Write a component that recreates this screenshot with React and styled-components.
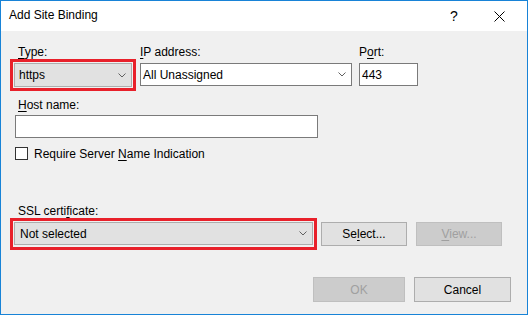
import React from "react";
import styled, { createGlobalStyle } from "styled-components";

const GlobalStyle = createGlobalStyle`
  html, body { margin: 0; padding: 0; background: #ffffff; }
  body { font-family: "Liberation Sans", Arial, sans-serif; font-size: 12px; color: #000; }
  * { box-sizing: border-box; }
`;

const Window = styled.div`
  width: 528px;
  height: 315px;
  border: 1px solid #1883d7;
  display: flex;
  flex-direction: column;
  background: #f0f0f0;
  overflow: hidden;
`;

const TitleBar = styled.div`
  height: 30px;
  flex: none;
  background: #ffffff;
  display: flex;
  align-items: center;
  padding: 0 18px 0 8px;
`;

const Title = styled.div`
  flex: 1;
  font-size: 12px;
  line-height: 15px;
  padding-bottom: 1px;
`;

const CaptionButton = styled.div`
  width: 20px;
  height: 20px;
  display: flex;
  align-items: center;
  justify-content: center;
  font-size: 14px;
  margin-left: ${(p) => p.$gap || 0}px;
`;

const Body = styled.div`
  flex: 1;
  display: flex;
  flex-direction: column;
  padding: 14px 16px 12px 9px;
`;

const FieldRow = styled.div`
  display: flex;
  align-items: flex-start;
`;

const Field = styled.div`
  display: flex;
  flex-direction: column;
  margin-left: ${(p) => p.$offset || 0}px;
`;

const Label = styled.div`
  font-size: 12px;
  line-height: 14px;
  height: 14px;
  padding-left: ${(p) => p.$indent || 0}px;
  margin-bottom: ${(p) => p.$space || 0}px;
  margin-top: ${(p) => p.$top || 0}px;
  white-space: nowrap;
`;

const U = styled.span`
  text-decoration: underline;
  text-underline-offset: 2px;
`;

const Highlight = styled.div`
  border: 3px solid #e8202a;
  padding: 1px 1px ${(p) => p.$bottom || 1}px 1px;
  display: flex;
`;

const Combo = styled.div`
  width: ${(p) => p.$w}px;
  height: ${(p) => p.$h || 23}px;
  border: 1px solid ${(p) => (p.$editable ? "#7a7a7a" : "#adadad")};
  background: ${(p) => (p.$editable ? "#ffffff" : "#e1e1e1")};
  display: flex;
  align-items: center;
  justify-content: space-between;
  padding: 0 5px 0 ${(p) => p.$pad || 4}px;
  font-size: 12px;
  line-height: 14px;
  white-space: nowrap;
`;

const TextBox = styled.div`
  width: ${(p) => p.$w}px;
  height: 23px;
  border: 1px solid #7a7a7a;
  background: #ffffff;
  display: flex;
  align-items: center;
  padding-left: 2px;
  margin-left: ${(p) => p.$left || 0}px;
  font-size: 12px;
`;

const CheckRow = styled.label`
  display: flex;
  align-items: center;
  gap: 6px;
  margin: 9px 0 0 5px;
  height: 13px;
  font-size: 12px;
  line-height: 14px;
`;

const CheckBox = styled.span`
  width: 13px;
  height: 13px;
  border: 1px solid #333333;
  background: #ffffff;
  flex: none;
`;

const SslRow = styled.div`
  display: flex;
  align-items: center;
`;

const Button = styled.div`
  width: ${(p) => p.$w}px;
  height: ${(p) => p.$h || 24}px;
  margin-left: ${(p) => p.$left || 0}px;
  border: 1px solid ${(p) => (p.$disabled ? "#bfbfbf" : "#adadad")};
  background: ${(p) => (p.$disabled ? "#cccccc" : "#e1e1e1")};
  color: ${(p) => (p.$disabled ? "#a0a0a0" : "#000000")};
  display: flex;
  align-items: center;
  justify-content: center;
  font-size: 12px;
  line-height: 14px;
`;

const Footer = styled.div`
  margin-top: auto;
  display: flex;
  justify-content: flex-end;
  gap: 9px;
`;

const Chevron = () => (
  <svg width="8" height="5" viewBox="0 0 8 5">
    <polyline points="0.5,0.5 4,4 7.5,0.5" fill="none" stroke="#606060" strokeWidth="1" />
  </svg>
);

const CloseGlyph = () => (
  <svg width="11" height="11" viewBox="0 0 11 11">
    <line x1="0.5" y1="0.5" x2="10.5" y2="10.5" stroke="#000" strokeWidth="1" />
    <line x1="10.5" y1="0.5" x2="0.5" y2="10.5" stroke="#000" strokeWidth="1" />
  </svg>
);

export default function App() {
  return (
    <>
      <GlobalStyle />
      <Window>
        <TitleBar>
          <Title>Add Site Binding</Title>
          <CaptionButton>?</CaptionButton>
          <CaptionButton $gap={25}>
            <CloseGlyph />
          </CaptionButton>
        </TitleBar>
        <Body>
          <FieldRow>
            <Field>
              <Label $indent={8}>
                <U>T</U>ype:
              </Label>
              <Highlight>
                <Combo $w={118} $h={24} $pad={4}>
                  <span>https</span>
                  <Chevron />
                </Combo>
              </Highlight>
            </Field>
            <Field $offset={4}>
              <Label $space={4}>
                <U>I</U>P address:
              </Label>
              <Combo $w={212} $editable $pad={2}>
                <span>All Unassigned</span>
                <Chevron />
              </Combo>
            </Field>
            <Field $offset={7}>
              <Label $space={4}>
                P<U>o</U>rt:
              </Label>
              <TextBox $w={59}>443</TextBox>
            </Field>
          </FieldRow>

          <Label $indent={8} $top={7} $space={3}>
            <U>H</U>ost name:
          </Label>
          <TextBox $w={303} $left={5} />

          <CheckRow>
            <CheckBox />
            <span>
              Require Server <U>N</U>ame Indication
            </span>
          </CheckRow>

          <Label $indent={8} $top={44}>
            SSL certi<U>f</U>icate:
          </Label>
          <SslRow>
            <Highlight $bottom={2}>
              <Combo $w={299} $pad={5}>
                <span>Not selected</span>
                <Chevron />
              </Combo>
            </Highlight>
            <Button $w={86} $left={4}>
              <span>
                Se<U>l</U>ect...
              </span>
            </Button>
            <Button $w={86} $left={9} $disabled>
              <span>
                <U>V</U>iew...
              </span>
            </Button>
          </SslRow>

          <Footer>
            <Button $w={92} $h={25} $disabled>
              OK
            </Button>
            <Button $w={97} $h={25}>
              Cancel
            </Button>
          </Footer>
        </Body>
      </Window>
    </>
  );
}
